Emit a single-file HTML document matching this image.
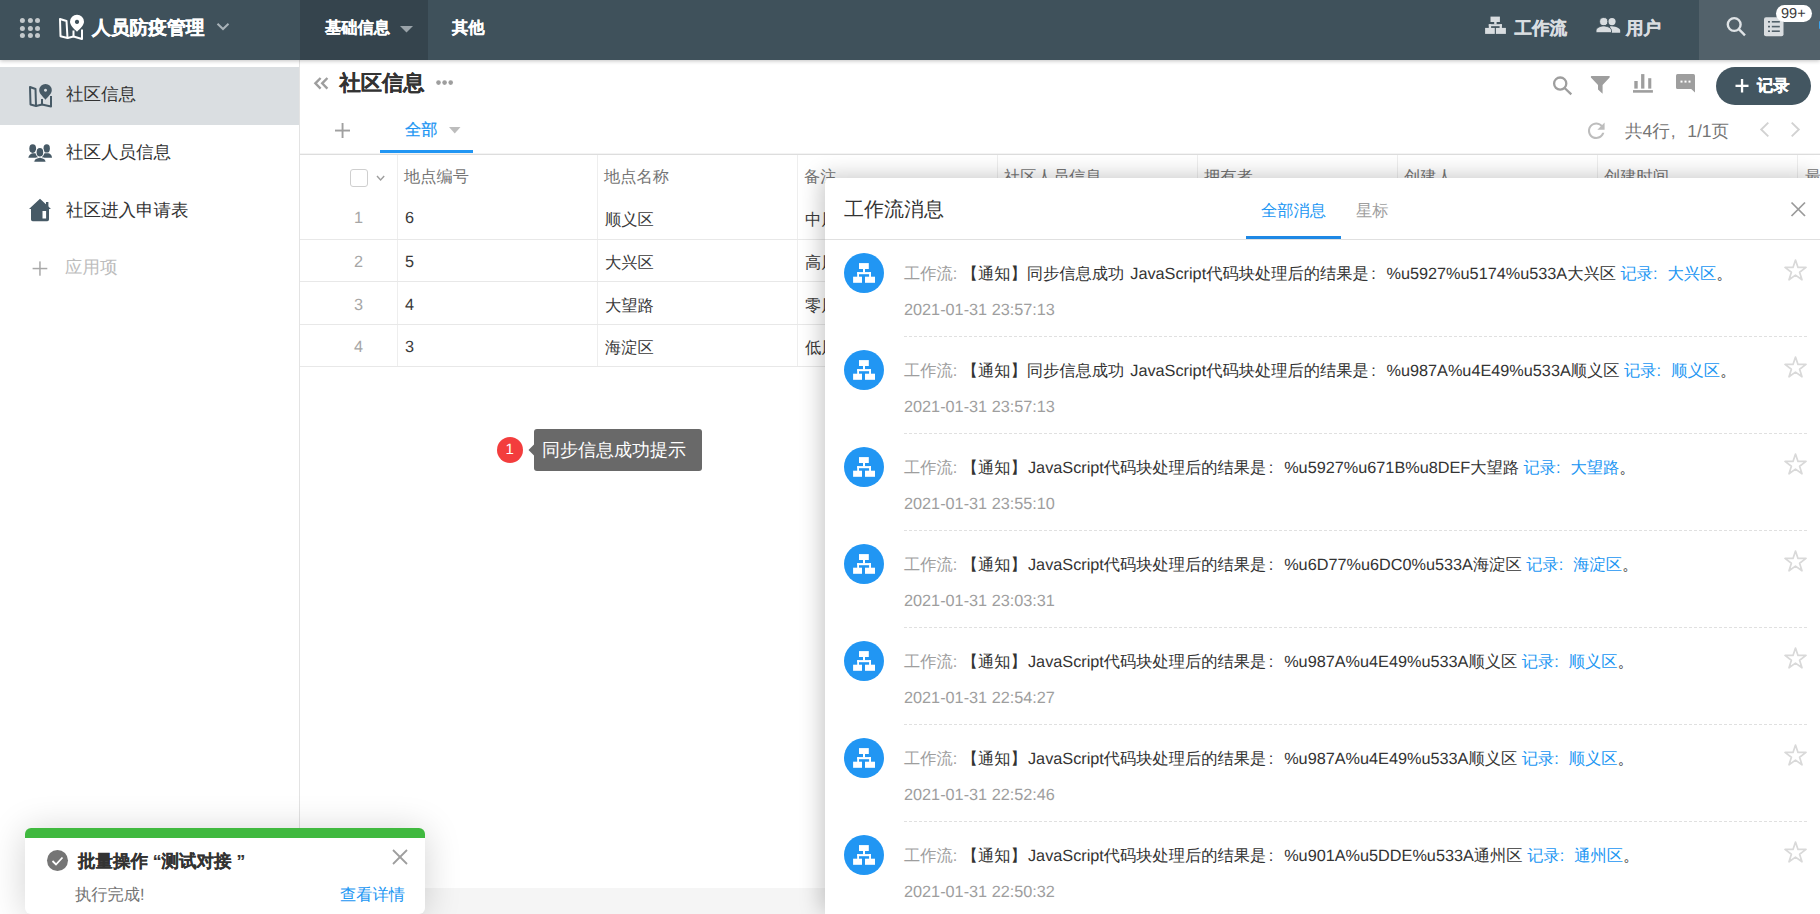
<!DOCTYPE html>
<html><head><meta charset="utf-8">
<style>
*{box-sizing:border-box;margin:0;padding:0}
html,body{width:1820px;height:914px;overflow:hidden;background:#fff;font-family:"Liberation Sans",sans-serif;color:#333;text-rendering:geometricPrecision}
.a{position:absolute}
.t{position:absolute;white-space:nowrap;line-height:1}
.bd{font-weight:bold;-webkit-text-stroke:0.35px currentColor}
svg{position:absolute;overflow:visible}
#top{left:0;top:0;width:1820px;height:60px;background:#3f515b;box-shadow:0 1px 4px rgba(0,0,0,.24);z-index:5}
#side{left:0;top:60px;width:300px;height:854px;border-right:1px solid #e3e3e3;background:#fff}
.sel{left:0;top:67px;width:299px;height:58px;background:#dadee1}
.hline{position:absolute;height:1px;background:#e8e8e8}
.vline{position:absolute;width:1px;background:#eeeeee}
.num{color:#a6a6a6;font-size:16.25px}
.cell{color:#3a3a3a;font-size:16.25px}
.hd{color:#757575;font-size:16.25px}
#panel{left:825px;top:178px;width:995px;height:736px;background:#fff;box-shadow:-4px -2px 22px rgba(0,0,0,.22);border-radius:5px 0 0 0;z-index:10}
.msg{position:absolute;left:0;width:995px;height:97px}
.av{position:absolute;left:19px;top:14px;width:40px;height:40px;border-radius:50%;background:#2196f3}
.l1{position:absolute;left:79px;top:0;font-size:16.25px;white-space:nowrap;line-height:1;color:#333}
.l1 .g{color:#9e9e9e}
.l1 .b{color:#2196f3}
.co{display:inline-block;width:14.6px;padding-left:0}
.co2{display:inline-block;width:17.8px;padding-left:2.5px}
.dt{position:absolute;left:79px;font-size:16.25px;white-space:nowrap;line-height:1;color:#9e9e9e}
.dash{position:absolute;left:79px;width:903px;height:1px;background:repeating-linear-gradient(90deg,#e0e0e0 0 3px,transparent 3px 5px)}
</style></head><body>

<!-- TOP BAR -->
<div id="top" class="a">
  <div class="a" style="left:300px;top:0;width:128px;height:60px;background:#35444d"></div>
  <div class="a" style="left:1699px;top:0;width:121px;height:60px;background:#52616a"></div>
  <!-- grid dots -->
  <svg style="left:0;top:0" width="60" height="60">
    <g fill="#c3c8cb">
      <circle cx="22.4" cy="20.5" r="2.5"/><circle cx="30.4" cy="20.5" r="2.5"/><circle cx="37.5" cy="20.5" r="2.5"/>
      <circle cx="22.4" cy="28.4" r="2.5"/><circle cx="30.4" cy="28.4" r="2.5"/><circle cx="37.5" cy="28.4" r="2.5"/>
      <circle cx="22.4" cy="35.5" r="2.5"/><circle cx="30.4" cy="35.5" r="2.5"/><circle cx="37.5" cy="35.5" r="2.5"/>
    </g>
  </svg>
  <!-- map pin icon -->
  <svg style="left:0;top:0" width="100" height="60">
    <g fill="none" stroke="#fff" stroke-width="2" stroke-linejoin="round">
      <path d="M60 19 L66.5 21 L67.5 38 L60.5 36.2 Z"/>
      <path d="M67.5 38 L73.5 36.5 L82 39 L82 29.5"/>
      <path d="M73.5 36.5 L73.5 30.5"/>
    </g>
    <path fill="#fff" d="M77 14.8 a7 7 0 0 1 7 7 c0 3.5 -4 7 -7 10 c-3 -3 -7 -6.5 -7 -10 a7 7 0 0 1 7 -7z M77 19.8 a2.1 2.1 0 1 0 0.01 0z"/>
  </svg>
  <div class="t bd" style="left:92px;top:19px;font-size:18.75px;color:#fff">人员防疫管理</div>
  <svg style="left:0;top:0" width="240" height="60"><path d="M217.5 23.8 L223 29 L228.5 23.8" fill="none" stroke="#a9b3b9" stroke-width="2"/></svg>
  <div class="t bd" style="-webkit-text-stroke:0.2px #fff;left:325px;top:20px;font-size:16.25px;color:#fff">基础信息</div>
  <svg style="left:0;top:0" width="420" height="60"><path d="M400 26 L413 26 L406.5 32.5 Z" fill="#9aa3a9"/></svg>
  <div class="t bd" style="-webkit-text-stroke:0.2px #fff;left:452px;top:20px;font-size:16.25px;color:#fff">其他</div>
  <!-- workflow icon -->
  <svg style="left:0;top:0" width="1520" height="60"><g fill="#d9dde0">
    <rect x="1490.5" y="16.6" width="9.4" height="5.4"/>
    <rect x="1494.2" y="21.8" width="2.4" height="2.6"/>
    <rect x="1488.8" y="24.2" width="13.1" height="2"/>
    <rect x="1488.8" y="24.2" width="2.3" height="3.9"/>
    <rect x="1499.6" y="24.2" width="2.3" height="3.9"/>
    <rect x="1485.1" y="27.9" width="9.7" height="6"/>
    <rect x="1495.9" y="27.9" width="10" height="6"/>
  </g></svg>
  <div class="t bd" style="left:1514.5px;top:20px;font-size:17.5px;color:#d9dde0">工作流</div>
  <!-- users icon -->
  <svg style="left:0;top:0" width="1630" height="60"><g fill="#d9dde0">
    <circle cx="1612" cy="21.6" r="3.6"/>
    <path d="M1610 26.3 c4.5 0 10.2 1.2 10.2 4.5 v1.9 h-8.7z"/>
    <circle cx="1603.7" cy="21.6" r="4.1" stroke="#3f515b" stroke-width="0.9"/>
    <path d="M1596 32.7 v-2 c0-3.4 5.2-4.8 7.7-4.8 s7.8 1.4 7.8 4.8 v2z" stroke="#3f515b" stroke-width="0.9"/>
  </g></svg>
  <div class="t bd" style="left:1626px;top:20px;font-size:17.5px;color:#d9dde0">用户</div>
  <!-- search -->
  <svg style="left:0;top:0" width="1760" height="60"><g fill="none" stroke="#dfe3e6" stroke-width="2.4">
    <circle cx="1734.2" cy="24.5" r="6.4"/><path d="M1738.8 29.2 L1745 35.3"/></g></svg>
  <!-- list icon -->
  <svg style="left:0;top:0" width="1800" height="60">
    <rect x="1764" y="17.2" width="19.5" height="19" rx="2" fill="#d9dde0"/>
    <g fill="#52616a"><rect x="1768" y="21" width="2" height="1.6"/><rect x="1771.8" y="21" width="8" height="1.6"/>
    <rect x="1768" y="25.8" width="2" height="1.6"/><rect x="1771.8" y="25.8" width="8" height="1.6"/>
    <rect x="1768" y="30.4" width="2" height="1.6"/><rect x="1771.8" y="30.4" width="8" height="1.6"/></g>
  </svg>
  <div class="a" style="left:1776px;top:5px;width:36px;height:17px;border-radius:9px;background:#fff"></div>
  <div class="t" style="left:1781px;top:6.5px;font-size:14.5px;color:#3a3a3a">99+</div>
  <div class="a" style="left:1819px;top:21px;width:3px;height:8px;background:#3aa0e8;border-radius:1px"></div>
</div>

<!-- SIDEBAR -->
<div id="side" class="a"></div>
<div class="a sel"></div>
<svg style="left:0;top:0" width="60" height="300">
  <g fill="none" stroke="#475a66" stroke-width="2" stroke-linejoin="round">
    <path d="M30 87 L35.5 89 L36 106 L30.5 104.5 Z"/>
    <path d="M36 106 L42 104.5 L51 106.5 L51 96"/>
    <path d="M42 104.5 L42 99"/>
  </g>
  <path fill="#475a66" d="M45.5 84 a6.3 6.3 0 0 1 6.3 6.3 c0 3.3 -3.8 6.5 -6.3 9.4 c-2.5 -2.9 -6.3 -6.1 -6.3 -9.4 a6.3 6.3 0 0 1 6.3 -6.3z M45.5 88.8 a1.5 1.5 0 1 0 0.01 0z"/>
  <!-- people -->
  <g fill="#475a66">
    <ellipse cx="32.7" cy="148.6" rx="3.4" ry="4.3"/><path d="M28.3 157.8 c.4-2.6 2.4-4.3 4.3-4.6 l3.4 0 c1.8.5 2.8 2.2 2.8 4.6z"/>
    <ellipse cx="46.7" cy="148.4" rx="3.2" ry="4.2"/><path d="M41.5 157.8 c.3-2.4 1.3-4 3.3-4.6 l3.6 0 c2 .4 3.5 2 3.6 4.6z"/>
    <g stroke="#fff" stroke-width="1.1">
    <ellipse cx="39.9" cy="152.3" rx="3.9" ry="4.9"/>
    <path d="M33.6 162.4 c.2-2.7 2-4.2 4.3-4.6 l1 -.6 h2 l1 .6 c2.4.4 4.2 2 4.3 4.6z"/>
    </g>
  </g>
  <!-- house -->
  <g fill="#475a66">
    <path d="M29 209 L40 198.8 L51 209 L49 209 L49 219.5 a1.7 1.7 0 0 1 -1.7 1.7 L32.7 221.2 a1.7 1.7 0 0 1 -1.7 -1.7 L31 209z"/>
    <rect x="46" y="202" width="2.4" height="5"/>
  </g>
  <rect x="42.5" y="211" width="3.6" height="7.5" fill="#fff"/>
  <g fill="#a8a8a8"><rect x="32.6" y="267.8" width="14.7" height="1.5"/><rect x="39.2" y="261.4" width="1.5" height="14.3"/></g>
</svg>
<div class="t" style="left:66px;top:86px;font-size:17.5px;color:#333">社区信息</div>
<div class="t" style="left:66px;top:144px;font-size:17.5px;color:#333">社区人员信息</div>
<div class="t" style="left:66px;top:202px;font-size:17.5px;color:#333">社区进入申请表</div>
<div class="t" style="left:65px;top:259px;font-size:17.5px;color:#bdbdbd">应用项</div>

<!-- MAIN HEADER -->
<svg style="left:0;top:0" width="480" height="160">
  <g fill="none" stroke="#9e9e9e" stroke-width="2.4">
    <path d="M320.6 78 L315.4 83.3 L320.6 88.6"/><path d="M327.4 78 L322.2 83.3 L327.4 88.6"/>
  </g>
  <g fill="#9e9e9e"><circle cx="438.5" cy="82.6" r="2.3"/><circle cx="444.6" cy="82.6" r="2.3"/><circle cx="450.7" cy="82.6" r="2.3"/></g>
  <g fill="#a0a0a0"><rect x="335" y="129.6" width="15" height="1.9"/><rect x="341.6" y="123" width="1.9" height="15"/></g>
  <path d="M449 127 L460.5 127 L454.75 133.5z" fill="#bdbdbd"/>
</svg>
<div class="t bd" style="-webkit-text-stroke:0.15px #333;left:339.5px;top:73px;font-size:21.25px;color:#333">社区信息</div>
<div class="t" style="left:405px;top:122px;font-size:16.25px;color:#2196f3;-webkit-text-stroke:0.25px #2196f3">全部</div>
<div class="a" style="left:380px;top:150px;width:93px;height:3px;background:#2196f3"></div>
<div class="hline" style="left:300px;top:153px;width:1520px;background:#f4f4f4"></div><div class="hline" style="left:300px;top:154px;width:1520px;background:#dddddd"></div>

<!-- right tools -->
<svg style="left:0;top:0" width="1820" height="150">
  <g fill="none" stroke="#9e9e9e" stroke-width="2.3"><circle cx="1560.2" cy="83.6" r="6.1"/><path d="M1564.6 88 L1571.3 94.3"/></g>
  <path d="M1591.5 76 L1609.3 76 Q1610.2 76.3 1609.6 77.4 L1602.6 85 L1602.6 93.7 L1598 89.6 L1598 85 L1590.9 77.4 Q1590.5 76.3 1591.5 76 Z" fill="#9e9e9e"/>
  <g fill="#9e9e9e"><rect x="1634.3" y="81" width="3.4" height="7.6"/><rect x="1641.1" y="74.1" width="3.3" height="14.5"/><rect x="1648.2" y="78.2" width="3.1" height="10.4"/><rect x="1633" y="90.1" width="19.9" height="2.6"/></g>
  <path d="M1677.5 74.1 L1693.4 74.1 Q1695 74.1 1695 75.7 L1695 92.5 L1691.2 89 L1677.5 89 Q1676 89 1676 87.5 L1676 75.7 Q1676 74.1 1677.5 74.1 Z" fill="#9e9e9e"/>
  <g fill="#fff"><rect x="1680.5" y="80.6" width="2" height="2"/><rect x="1684.5" y="80.6" width="2" height="2"/><rect x="1688.5" y="80.6" width="2" height="2"/></g>
  <!-- refresh -->
  <path transform="translate(1583.8 118.3) scale(1.04)" fill="#bdbdbd" d="M17.65 6.35C16.2 4.9 14.21 4 12 4c-4.42 0-7.99 3.58-7.99 8s3.57 8 7.99 8c3.73 0 6.84-2.55 7.730-6h-2.08c-.82 2.330-3.04 4-5.650 4-3.310 0-6-2.690-6-6s2.690-6 6-6c1.660 0 3.140.690 4.220 1.780L13 11h7V4l-2.350 2.350z"/>
  <g fill="none" stroke="#d2d2d2" stroke-width="1.9"><path d="M1768.3 122.6 L1761.2 129.5 L1768.3 136.4"/><path d="M1791.7 122.6 L1798.8 129.5 L1791.7 136.4"/></g>
</svg>
<div class="a" style="left:1716px;top:67px;width:95px;height:38px;border-radius:19px;background:#435661"></div>
<svg style="left:0;top:0" width="1820" height="110"><g fill="#fff"><rect x="1735.5" y="84.7" width="13" height="2.3"/><rect x="1740.9" y="79" width="2.3" height="13.5"/></g></svg>
<div class="t bd" style="left:1757px;top:77.5px;font-size:16.25px;color:#fff">记录</div>
<div class="t" style="left:1625px;top:123px;font-size:17.5px;color:#757575">共4行<span style="display:inline-block;width:17.5px;padding-left:1px">,</span>1/1页</div>

<!-- TABLE -->
<div class="a" style="left:350px;top:169px;width:18px;height:18px;border:1px solid #cfcfcf;border-radius:3px;background:#fff"></div>
<svg style="left:0;top:0" width="400" height="200"><path d="M377 176 L380.6 180 L384.2 176" fill="none" stroke="#9e9e9e" stroke-width="1.4"/></svg>
<div class="vline" style="left:397px;top:155px;height:211px"></div>
<div class="vline" style="left:597px;top:155px;height:211px"></div>
<div class="vline" style="left:797px;top:155px;height:211px"></div>
<div class="vline" style="left:997px;top:155px;height:211px"></div>
<div class="vline" style="left:1197px;top:155px;height:211px"></div>
<div class="vline" style="left:1397px;top:155px;height:211px"></div>
<div class="vline" style="left:1597px;top:155px;height:211px"></div>
<div class="vline" style="left:1797px;top:155px;height:211px"></div>
<div class="hline" style="left:300px;top:239px;width:1520px"></div>
<div class="hline" style="left:300px;top:281px;width:1520px"></div>
<div class="hline" style="left:300px;top:324px;width:1520px"></div>
<div class="hline" style="left:300px;top:366px;width:1520px"></div>
<div class="t hd" style="margin-top:1px;left:404px;top:168px">地点编号</div>
<div class="t hd" style="margin-top:1px;left:604px;top:168px">地点名称</div>
<div class="t hd" style="margin-top:1px;left:804px;top:168px">备注</div>
<div class="t hd" style="margin-top:1px;left:1004px;top:168px">社区人员信息</div>
<div class="t hd" style="margin-top:1px;left:1204px;top:168px">拥有者</div>
<div class="t hd" style="margin-top:1px;left:1404px;top:168px">创建人</div>
<div class="t hd" style="margin-top:1px;left:1604px;top:168px">创建时间</div>
<div class="t hd" style="margin-top:1px;left:1805px;top:168px">最</div>

<div class="t num" style="left:354px;top:210px">1</div>
<div class="t num" style="left:354px;top:253.5px">2</div>
<div class="t num" style="left:354px;top:296.5px">3</div>
<div class="t num" style="left:354px;top:338.5px">4</div>
<div class="t cell" style="left:405px;top:210px">6</div>
<div class="t cell" style="left:405px;top:253.5px">5</div>
<div class="t cell" style="left:405px;top:296.5px">4</div>
<div class="t cell" style="left:405px;top:338.5px">3</div>
<div class="t cell" style="left:605px;top:211.5px">顺义区</div>
<div class="t cell" style="left:605px;top:254.5px">大兴区</div>
<div class="t cell" style="left:605px;top:297.5px">大望路</div>
<div class="t cell" style="left:605px;top:339.5px">海淀区</div>
<div class="t cell" style="left:805px;top:211.5px">中风险</div>
<div class="t cell" style="left:805px;top:254.5px">高风险</div>
<div class="t cell" style="left:805px;top:297.5px">零风险</div>
<div class="t cell" style="left:805px;top:339.5px">低风险</div>

<!-- bottom scrollbar track -->
<div class="a" style="left:300px;top:888px;width:1520px;height:26px;background:#f5f5f5"></div>

<!-- TOOLTIP -->
<div class="a" style="left:497px;top:437px;width:26px;height:26px;border-radius:50%;background:#f33d3d"></div>
<div class="t" style="left:505.5px;top:442px;font-size:15px;color:#fff">1</div>
<div class="a" style="left:534px;top:429px;width:168px;height:42px;border-radius:3px;background:#696969"></div>
<svg style="left:0;top:0" width="540" height="480"><path d="M534 444.5 L528.5 450 L534 455.5z" fill="#696969"/></svg>
<div class="t" style="left:542px;top:441px;font-size:18px;color:#fff">同步信息成功提示</div>

<!-- PANEL -->
<div id="panel" class="a">
  <div class="t" style="left:19px;top:22px;font-size:20px;color:#333">工作流消息</div>
  <div class="t" style="left:436px;top:25px;font-size:16.25px;color:#2196f3">全部消息</div>
  <div class="t" style="left:531px;top:25px;font-size:16.25px;color:#9e9e9e">星标</div>
  <div class="a" style="left:421px;top:58px;width:95px;height:3px;background:#1e88e5"></div>
  <div class="a" style="left:0;top:61px;width:995px;height:1px;background:#e0e0e0"></div>
  <svg style="left:0;top:0" width="995" height="60"><g stroke="#9a9a9a" stroke-width="1.7"><path d="M966.5 24.5 L980 38"/><path d="M980 24.5 L966.5 38"/></g></svg>
  <!--MSGS--><div class="msg" style="top:61px"><div class="av"><svg style="left:0;top:0" width="40" height="40"><g fill="#fff">
<rect x="15" y="10.1" width="9.8" height="5.9"/><rect x="19" y="15.5" width="2" height="4"/>
<rect x="13.2" y="19.1" width="13.8" height="2.1"/><rect x="13.2" y="19.1" width="1.8" height="5"/><rect x="25.1" y="19.1" width="1.9" height="5"/>
<rect x="9.1" y="23.7" width="8.9" height="6.1"/><rect x="21" y="23.7" width="10" height="6.1"/></g></svg></div><div class="l1" style="top:27px"><span class="g">工作流:</span> 【通知】同步信息成功<span style="margin-left:1.5px"> </span>JavaScript代码块处理后的结果是<span class="co2">:</span>%u5927%u5174%u533A大兴区 <span class="b">记录<span class="co">:</span>大兴区</span>。</div><div class="dt" style="top:63px">2021-01-31 23:57:13</div><div class="dash" style="top:97px"></div><svg style="left:0;top:0" width="995" height="97"><path d="M970.5 21 L973 28.4 L981 28.4 L974.6 33.2 L977 40.8 L970.5 36.1 L964 40.8 L966.4 33.2 L960 28.4 L968 28.4 Z" fill="none" stroke="#d9d9d9" stroke-width="1.7" stroke-linejoin="round"/></svg></div>
<div class="msg" style="top:158px"><div class="av"><svg style="left:0;top:0" width="40" height="40"><g fill="#fff">
<rect x="15" y="10.1" width="9.8" height="5.9"/><rect x="19" y="15.5" width="2" height="4"/>
<rect x="13.2" y="19.1" width="13.8" height="2.1"/><rect x="13.2" y="19.1" width="1.8" height="5"/><rect x="25.1" y="19.1" width="1.9" height="5"/>
<rect x="9.1" y="23.7" width="8.9" height="6.1"/><rect x="21" y="23.7" width="10" height="6.1"/></g></svg></div><div class="l1" style="top:27px"><span class="g">工作流:</span> 【通知】同步信息成功<span style="margin-left:1.5px"> </span>JavaScript代码块处理后的结果是<span class="co2">:</span>%u987A%u4E49%u533A顺义区 <span class="b">记录<span class="co">:</span>顺义区</span>。</div><div class="dt" style="top:63px">2021-01-31 23:57:13</div><div class="dash" style="top:97px"></div><svg style="left:0;top:0" width="995" height="97"><path d="M970.5 21 L973 28.4 L981 28.4 L974.6 33.2 L977 40.8 L970.5 36.1 L964 40.8 L966.4 33.2 L960 28.4 L968 28.4 Z" fill="none" stroke="#d9d9d9" stroke-width="1.7" stroke-linejoin="round"/></svg></div>
<div class="msg" style="top:255px"><div class="av"><svg style="left:0;top:0" width="40" height="40"><g fill="#fff">
<rect x="15" y="10.1" width="9.8" height="5.9"/><rect x="19" y="15.5" width="2" height="4"/>
<rect x="13.2" y="19.1" width="13.8" height="2.1"/><rect x="13.2" y="19.1" width="1.8" height="5"/><rect x="25.1" y="19.1" width="1.9" height="5"/>
<rect x="9.1" y="23.7" width="8.9" height="6.1"/><rect x="21" y="23.7" width="10" height="6.1"/></g></svg></div><div class="l1" style="top:27px"><span class="g">工作流:</span> 【通知】<span style="margin-left:1.2px"></span>JavaScript代码块处理后的结果是<span class="co2">:</span>%u5927%u671B%u8DEF大望路 <span class="b">记录<span class="co">:</span>大望路</span>。</div><div class="dt" style="top:63px">2021-01-31 23:55:10</div><div class="dash" style="top:97px"></div><svg style="left:0;top:0" width="995" height="97"><path d="M970.5 21 L973 28.4 L981 28.4 L974.6 33.2 L977 40.8 L970.5 36.1 L964 40.8 L966.4 33.2 L960 28.4 L968 28.4 Z" fill="none" stroke="#d9d9d9" stroke-width="1.7" stroke-linejoin="round"/></svg></div>
<div class="msg" style="top:352px"><div class="av"><svg style="left:0;top:0" width="40" height="40"><g fill="#fff">
<rect x="15" y="10.1" width="9.8" height="5.9"/><rect x="19" y="15.5" width="2" height="4"/>
<rect x="13.2" y="19.1" width="13.8" height="2.1"/><rect x="13.2" y="19.1" width="1.8" height="5"/><rect x="25.1" y="19.1" width="1.9" height="5"/>
<rect x="9.1" y="23.7" width="8.9" height="6.1"/><rect x="21" y="23.7" width="10" height="6.1"/></g></svg></div><div class="l1" style="top:27px"><span class="g">工作流:</span> 【通知】<span style="margin-left:1.2px"></span>JavaScript代码块处理后的结果是<span class="co2">:</span>%u6D77%u6DC0%u533A海淀区 <span class="b">记录<span class="co">:</span>海淀区</span>。</div><div class="dt" style="top:63px">2021-01-31 23:03:31</div><div class="dash" style="top:97px"></div><svg style="left:0;top:0" width="995" height="97"><path d="M970.5 21 L973 28.4 L981 28.4 L974.6 33.2 L977 40.8 L970.5 36.1 L964 40.8 L966.4 33.2 L960 28.4 L968 28.4 Z" fill="none" stroke="#d9d9d9" stroke-width="1.7" stroke-linejoin="round"/></svg></div>
<div class="msg" style="top:449px"><div class="av"><svg style="left:0;top:0" width="40" height="40"><g fill="#fff">
<rect x="15" y="10.1" width="9.8" height="5.9"/><rect x="19" y="15.5" width="2" height="4"/>
<rect x="13.2" y="19.1" width="13.8" height="2.1"/><rect x="13.2" y="19.1" width="1.8" height="5"/><rect x="25.1" y="19.1" width="1.9" height="5"/>
<rect x="9.1" y="23.7" width="8.9" height="6.1"/><rect x="21" y="23.7" width="10" height="6.1"/></g></svg></div><div class="l1" style="top:27px"><span class="g">工作流:</span> 【通知】<span style="margin-left:1.2px"></span>JavaScript代码块处理后的结果是<span class="co2">:</span>%u987A%u4E49%u533A顺义区 <span class="b">记录<span class="co">:</span>顺义区</span>。</div><div class="dt" style="top:63px">2021-01-31 22:54:27</div><div class="dash" style="top:97px"></div><svg style="left:0;top:0" width="995" height="97"><path d="M970.5 21 L973 28.4 L981 28.4 L974.6 33.2 L977 40.8 L970.5 36.1 L964 40.8 L966.4 33.2 L960 28.4 L968 28.4 Z" fill="none" stroke="#d9d9d9" stroke-width="1.7" stroke-linejoin="round"/></svg></div>
<div class="msg" style="top:546px"><div class="av"><svg style="left:0;top:0" width="40" height="40"><g fill="#fff">
<rect x="15" y="10.1" width="9.8" height="5.9"/><rect x="19" y="15.5" width="2" height="4"/>
<rect x="13.2" y="19.1" width="13.8" height="2.1"/><rect x="13.2" y="19.1" width="1.8" height="5"/><rect x="25.1" y="19.1" width="1.9" height="5"/>
<rect x="9.1" y="23.7" width="8.9" height="6.1"/><rect x="21" y="23.7" width="10" height="6.1"/></g></svg></div><div class="l1" style="top:27px"><span class="g">工作流:</span> 【通知】<span style="margin-left:1.2px"></span>JavaScript代码块处理后的结果是<span class="co2">:</span>%u987A%u4E49%u533A顺义区 <span class="b">记录<span class="co">:</span>顺义区</span>。</div><div class="dt" style="top:63px">2021-01-31 22:52:46</div><div class="dash" style="top:97px"></div><svg style="left:0;top:0" width="995" height="97"><path d="M970.5 21 L973 28.4 L981 28.4 L974.6 33.2 L977 40.8 L970.5 36.1 L964 40.8 L966.4 33.2 L960 28.4 L968 28.4 Z" fill="none" stroke="#d9d9d9" stroke-width="1.7" stroke-linejoin="round"/></svg></div>
<div class="msg" style="top:643px"><div class="av"><svg style="left:0;top:0" width="40" height="40"><g fill="#fff">
<rect x="15" y="10.1" width="9.8" height="5.9"/><rect x="19" y="15.5" width="2" height="4"/>
<rect x="13.2" y="19.1" width="13.8" height="2.1"/><rect x="13.2" y="19.1" width="1.8" height="5"/><rect x="25.1" y="19.1" width="1.9" height="5"/>
<rect x="9.1" y="23.7" width="8.9" height="6.1"/><rect x="21" y="23.7" width="10" height="6.1"/></g></svg></div><div class="l1" style="top:27px"><span class="g">工作流:</span> 【通知】<span style="margin-left:1.2px"></span>JavaScript代码块处理后的结果是<span class="co2">:</span>%u901A%u5DDE%u533A通州区 <span class="b">记录<span class="co">:</span>通州区</span>。</div><div class="dt" style="top:63px">2021-01-31 22:50:32</div><div class="dash" style="top:97px"></div><svg style="left:0;top:0" width="995" height="97"><path d="M970.5 21 L973 28.4 L981 28.4 L974.6 33.2 L977 40.8 L970.5 36.1 L964 40.8 L966.4 33.2 L960 28.4 L968 28.4 Z" fill="none" stroke="#d9d9d9" stroke-width="1.7" stroke-linejoin="round"/></svg></div><!--/MSGS-->
</div>

<!-- TOAST -->
<div class="a" style="left:25px;top:828px;width:400px;height:86px;border-radius:6px;background:#fff;box-shadow:0 3px 36px rgba(0,0,0,.18);overflow:hidden;z-index:20">
  <div class="a" style="left:0;top:0;width:400px;height:10px;background:#40b93f"></div>
  <div class="a" style="left:22px;top:22px;width:21px;height:21px;border-radius:50%;background:#757575"></div>
  <svg style="left:0;top:0" width="60" height="60"><path d="M27.5 33 L31 36.5 L37.5 29.5" fill="none" stroke="#fff" stroke-width="1.8"/></svg>
  <div class="t bd" style="-webkit-text-stroke:0.12px #333;left:53px;top:25px;font-size:17.5px;color:#333">批量操作 “测试对接 ”</div>
  <svg style="left:0;top:0" width="400" height="60"><g stroke="#9e9e9e" stroke-width="1.8"><path d="M368 22 L382 36"/><path d="M382 22 L368 36"/></g></svg>
  <div class="t" style="left:50px;top:59px;font-size:16.25px;color:#757575">执行完成!</div>
  <div class="t" style="left:315px;top:59px;font-size:16.25px;color:#2196f3">查看详情</div>
</div>

</body></html>
